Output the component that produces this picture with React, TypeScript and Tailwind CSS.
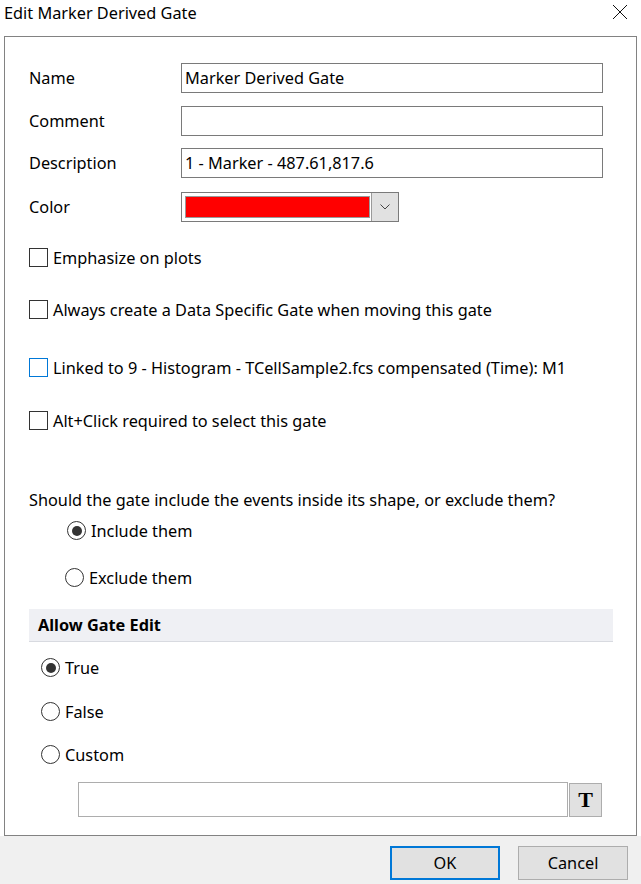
import React from "react";

const font = { fontFamily: '"Segoe UI", "Noto Sans", "Liberation Sans", sans-serif' };

function CheckBox({ blue = false }: { blue?: boolean }) {
  return (
    <span
      className={
        blue
          ? "block h-[19px] w-[19px] shrink-0 border border-[#0078d7] bg-white"
          : "block h-[19px] w-[19px] shrink-0 border border-[#333333] bg-white"
      }
    />
  );
}

function Radio({ checked = false }: { checked?: boolean }) {
  return (
    <span className="flex h-[19px] w-[19px] shrink-0 items-center justify-center rounded-full border border-[#333333] bg-white">
      {checked && <span className="block h-[10px] w-[10px] rounded-full bg-[#333333]" />}
    </span>
  );
}

function FieldRow({ label, value, className }: { label: string; value?: string; className: string }) {
  return (
    <div className={`flex items-center ${className}`}>
      <span className="w-[152px] leading-[22px]">{label}</span>
      <div className="flex h-[30px] w-[422px] items-center border border-[#7a7a7a] bg-white px-[3px] leading-[22px]">
        {value}
      </div>
    </div>
  );
}

export default function App() {
  return (
    <div className="flex h-[884px] w-[641px] flex-col bg-white text-[16.3px] text-black" style={font}>
      {/* title bar */}
      <div className="flex h-[36px] shrink-0 items-start justify-between pl-[4px] pr-[13px]">
        <span className="mt-[1px] text-[16.3px] leading-[24px]">Edit Marker Derived Gate</span>
        <svg width="16" height="16" viewBox="0 0 16 16" className="mt-[4px]">
          <path d="M1 1 L15 15 M15 1 L1 15" stroke="#111" strokeWidth="1" fill="none" />
        </svg>
      </div>

      {/* main panel */}
      <div className="mx-[4px] h-[800px] shrink-0 border border-[#828282] bg-white">
        <div className="pl-[24px] pt-[26px]">
          <FieldRow label="Name" value="Marker Derived Gate" className="" />
          <FieldRow label="Comment" className="mt-[13px]" />
          <FieldRow label="Description" value="1 - Marker - 487.61,817.6" className="mt-[12px]" />
          <div className="mt-[14px] flex items-center">
            <span className="w-[152px] leading-[22px]">Color</span>
            <div className="flex h-[30px] w-[218px] border border-[#7a7a7a] bg-white">
              <div className="flex flex-1 items-center pl-[3px] pr-[1px]">
                <div className="h-[22px] w-full border border-[#9a9a9a] bg-[#ff0000]" />
              </div>
              <div className="flex w-[27px] items-center justify-center border-l border-[#9a9a9a] bg-[#e1e1e1]">
                <svg width="10" height="6" viewBox="0 0 10 6">
                  <path d="M0.5 0.5 L5 5 L9.5 0.5" stroke="#444" strokeWidth="1" fill="none" />
                </svg>
              </div>
            </div>
          </div>
        </div>

        {/* checkboxes */}
        <div className="pl-[24px]">
          <div className="mt-[26px] flex h-[19px] items-center gap-[5px]">
            <CheckBox />
            <span className="leading-[22px]">Emphasize on plots</span>
          </div>
          <div className="mt-[33px] flex h-[19px] items-center gap-[5px]">
            <CheckBox />
            <span className="leading-[22px]">Always create a Data Specific Gate when moving this gate</span>
          </div>
          <div className="mt-[39px] flex h-[19px] items-center gap-[5px]">
            <CheckBox blue />
            <span className="leading-[22px]">Linked to 9 - Histogram - TCellSample2.fcs compensated (Time): M1</span>
          </div>
          <div className="mt-[34px] flex h-[19px] items-center gap-[5px]">
            <CheckBox />
            <span className="leading-[22px]">Alt+Click required to select this gate</span>
          </div>
        </div>

        {/* include / exclude */}
        <div className="mt-[59px] pl-[24px] leading-[22px]">
          Should the gate include the events inside its shape, or exclude them?
        </div>
        <div className="mt-[10px] flex h-[19px] items-center gap-[5px] pl-[62px]">
          <Radio checked />
          <span className="leading-[22px]">Include them</span>
        </div>
        <div className="mt-[28px] flex h-[19px] items-center gap-[5px] pl-[60px]">
          <Radio />
          <span className="leading-[22px]">Exclude them</span>
        </div>

        {/* allow gate edit */}
        <div className="ml-[24px] mt-[22px] flex h-[33px] w-[584px] items-center border-b border-[#d8dae0] bg-[#eff0f4] pl-[9px]">
          <span className="font-bold leading-[22px]">Allow Gate Edit</span>
        </div>
        <div className="mt-[16px] flex h-[19px] items-center gap-[5px] pl-[36px]">
          <Radio checked />
          <span className="leading-[22px]">True</span>
        </div>
        <div className="mt-[25px] flex h-[19px] items-center gap-[5px] pl-[36px]">
          <Radio />
          <span className="leading-[22px]">False</span>
        </div>
        <div className="mt-[24px] flex h-[19px] items-center gap-[5px] pl-[36px]">
          <Radio />
          <span className="leading-[22px]">Custom</span>
        </div>
        <div className="mt-[18px] flex items-start pl-[73px]">
          <div className="h-[35px] w-[490px] border border-[#adadad] bg-white" />
          <div className="ml-[1px] mt-[1px] flex h-[34px] w-[33px] items-center justify-center border border-[#adadad] bg-[#e1e1e1]">
            <span className="text-[22px] font-bold leading-none" style={{ fontFamily: '"Liberation Serif", serif' }}>
              T
            </span>
          </div>
        </div>
      </div>

      {/* footer */}
      <div className="flex flex-1 items-start justify-end gap-[18px] bg-[#f0f0f0] pr-[13px] pt-[10px]">
        <button className="flex h-[34px] w-[110px] items-center justify-center border-2 border-[#0078d7] bg-[#e1e1e1] leading-[22px]">
          OK
        </button>
        <button className="flex h-[34px] w-[110px] items-center justify-center border border-[#adadad] bg-[#e1e1e1] leading-[22px]">
          Cancel
        </button>
      </div>
    </div>
  );
}
